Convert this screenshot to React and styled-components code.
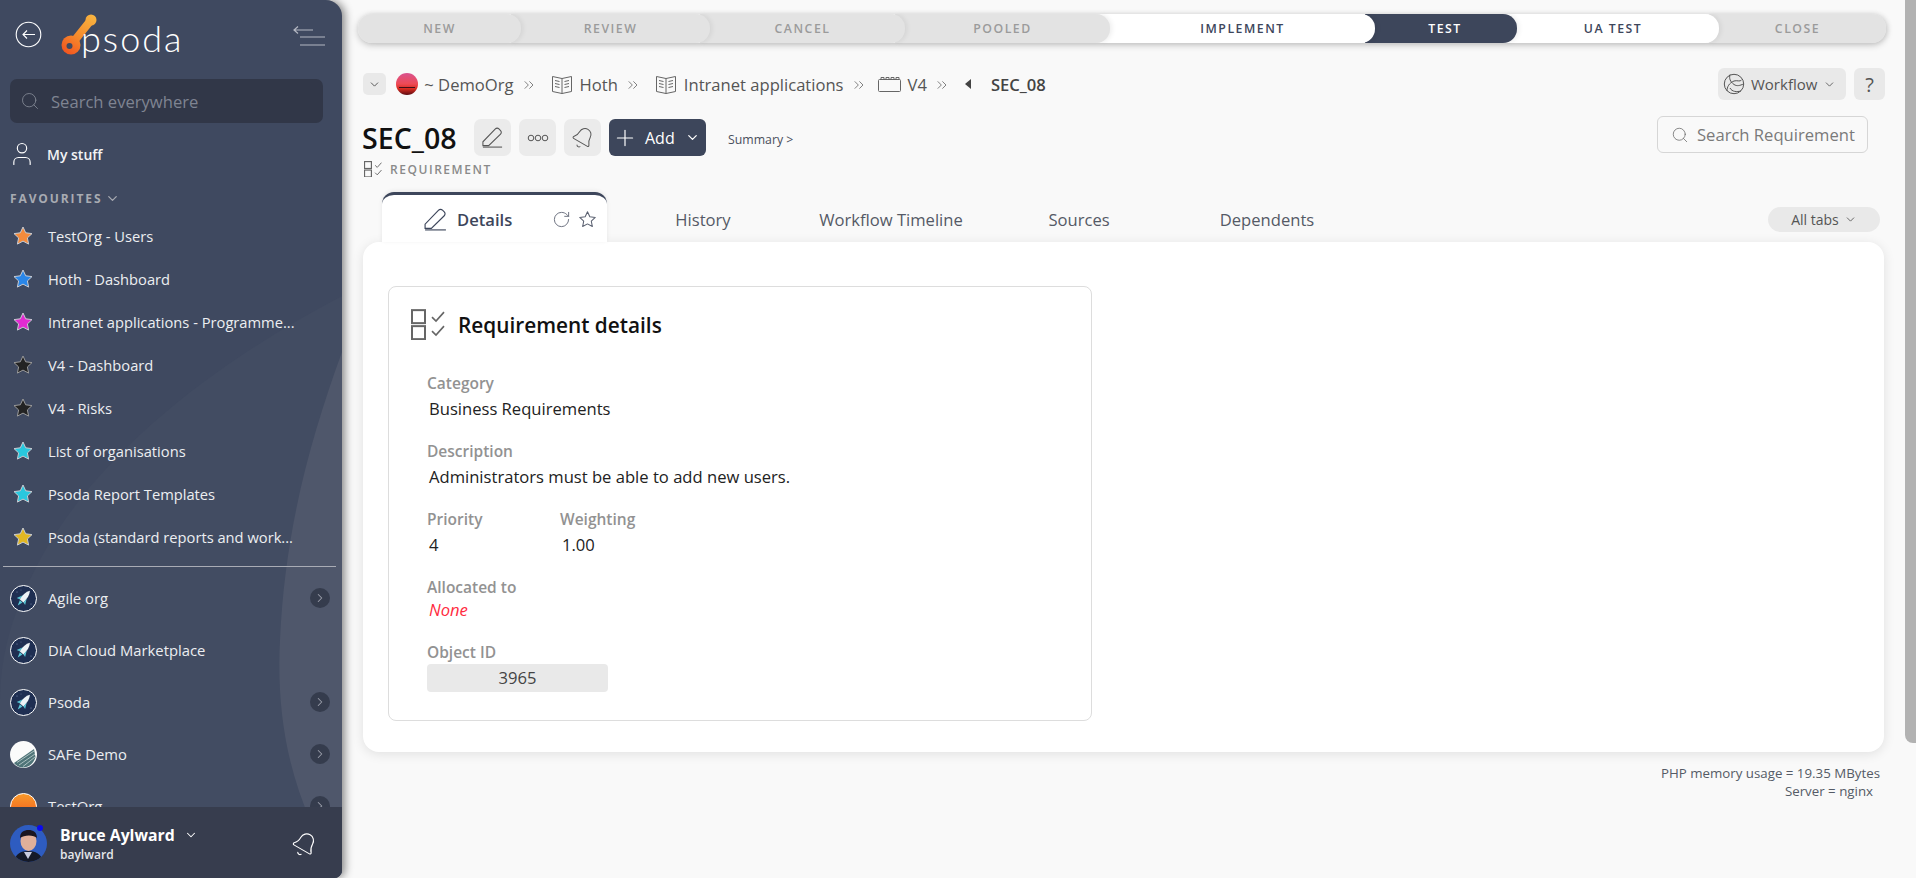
import React from "react";
import styled, { createGlobalStyle } from "styled-components";
import { Bell, ChevronDown, ChevronRight, ChevronsRight, Plus, RotateCw, Search, User } from "lucide-react";

const GlobalStyle = createGlobalStyle`
  html, body {
    margin: 0;
    padding: 0;
    height: 100%;
    overflow: hidden;
    background: #f9f9f9;
  }
  body {
    font-family: "Open Sans", "Liberation Sans", sans-serif;
    color: #222;
  }
  * { box-sizing: border-box; }
`;

const Page = styled.div`
  display: flex;
  width: 1916px;
  height: 878px;
  overflow: hidden;
`;

/* sidebar */
const Sidebar = styled.aside`
  position: relative;
  z-index: 5;
  flex: 0 0 342px;
  height: 878px;
  display: flex;
  flex-direction: column;
  overflow: hidden;
  background: #3f4960;
  border-radius: 0 16px 8px 0;
  box-shadow: 3px 0 8px rgba(0, 0, 0, 0.45);
`;

const Backdrop = styled.svg`
  position: absolute;
  inset: 0;
  width: 342px;
  height: 878px;
`;

const TopBar = styled.div`
  position: relative;
  height: 79px;
  flex: none;
  display: flex;
  align-items: flex-start;
  padding: 14px 16px 0 15px;
`;

const BackBtn = styled.svg`
  width: 27px;
  height: 27px;
  margin-top: 7px;
  margin-right: 17px;
  flex: none;
`;

const LogoMark = styled.svg`
  flex: none;
  margin-top: -2px;
`;

const Wordmark = styled.span`
  margin: 1px 0 0 -18px;
  font-family: Lato, "Open Sans", sans-serif;
  font-weight: 300;
  font-size: 36px;
  line-height: 46px;
  letter-spacing: 2px;
  color: #fff;
`;

const CollapseIcon = styled.svg`
  width: 33px;
  height: 22px;
  margin: 11px 0 0 auto;
`;

const SearchAll = styled.div`
  position: relative;
  flex: none;
  height: 44px;
  margin: 0 19px 0 10px;
  padding-left: 10px;
  display: flex;
  align-items: center;
  gap: 11px;
  border-radius: 7px;
  background: #313748;
  color: #7f8492;
  font-size: 16.6px;
  svg { flex: none; }
`;

const MineRow = styled.div`
  position: relative;
  flex: none;
  height: 40px;
  margin-top: 11px;
  padding-left: 8px;
  display: flex;
  align-items: center;
  gap: 11px;
  color: #f2f3f5;
  font-size: 14px;
  font-weight: 600;
`;

const FavHead = styled.div`
  position: relative;
  flex: none;
  height: 24px;
  margin: 12px 0 4px;
  padding-left: 10px;
  display: flex;
  align-items: center;
  gap: 3px;
  color: #a8abb2;
  font-size: 12px;
  font-weight: 700;
  letter-spacing: 1.9px;
`;

const FavRow = styled.div`
  position: relative;
  flex: none;
  height: 43px;
  padding-left: 12px;
  display: flex;
  align-items: center;
  gap: 14px;
  color: #eceef1;
  font-size: 14.7px;
`;

const Divider = styled.div`
  position: relative;
  flex: none;
  height: 1px;
  margin: 8px 6px 5px 3px;
  background: #a9acb5;
`;

const OrgList = styled.div`
  position: relative;
  flex: 1;
  min-height: 0;
  overflow: hidden;
`;

const OrgRow = styled.div`
  height: 52px;
  padding: 0 10px;
  display: flex;
  align-items: center;
  gap: 11px;
  color: #eceef1;
  font-size: 14.8px;
`;

const OrgName = styled.span`
  flex: 1;
`;

const Round = styled.span`
  width: 20px;
  height: 20px;
  margin-right: 2px;
  display: flex;
  align-items: center;
  justify-content: center;
  border-radius: 50%;
  background: #353c4d;
  color: #9a9eaa;
`;

const UserBar = styled.div`
  position: relative;
  flex: none;
  height: 71px;
  padding: 0 24px 0 10px;
  display: flex;
  align-items: center;
  background: #373d4e;
  color: #fff;
  > svg { margin-top: 3px; }
`;

const Face = styled.div`
  position: relative;
  width: 37px;
  height: 37px;
  margin: 1px 13px 0 0;
`;

const Dot = styled.span`
  position: absolute;
  top: 0;
  right: 4px;
  width: 6px;
  height: 6px;
  border-radius: 50%;
  background: #0a0af0;
`;

const UserText = styled.div`
  flex: 1;
  margin-top: 2px;
`;

const UserName = styled.div`
  display: flex;
  align-items: center;
  gap: 9px;
  font-size: 15.8px;
  line-height: 22px;
  font-weight: 700;
`;

const UserLogin = styled.div`
  font-size: 12px;
  line-height: 17px;
  font-weight: 600;
  color: #e6e7ea;
`;

/* main column */
const Main = styled.main`
  flex: 1;
  min-width: 0;
  height: 878px;
`;

const Stages = styled.div`
  display: flex;
  height: 29px;
  margin: 14px 19px 0 16px;
  border-radius: 14px;
  box-shadow: 0 2px 7px rgba(0, 0, 0, 0.22);
`;

const Stage = styled.div`
  position: relative;
  z-index: ${(p) => p.$z};
  flex: 0 0 ${(p) => p.$w}px;
  margin-left: ${(p) => (p.$first ? 0 : -10)}px;
  padding-left: ${(p) => p.$pad || 0}px;
  display: flex;
  align-items: center;
  justify-content: center;
  border-radius: ${(p) => (p.$first ? "14px" : "0 14px 14px 0")};
  background: ${(p) => (p.$kind === "current" ? "#3d465b" : p.$kind === "open" ? "#fff" : "#e3e3e3")};
  color: ${(p) => (p.$kind === "current" ? "#fff" : p.$kind === "open" ? "#3d465b" : "#9b9b9b")};
  box-shadow: 2px 0 5px rgba(0, 0, 0, 0.07);
  font-size: 12.3px;
  font-weight: 600;
  letter-spacing: 1.5px;
`;

const CrumbBar = styled.div`
  display: flex;
  align-items: center;
  height: 32px;
  margin: 25px 20px 0 21px;
  color: #555;
  font-size: 16.6px;
`;

const SmallBtn = styled.span`
  width: 23px;
  height: 22px;
  margin-right: 10px;
  display: flex;
  align-items: center;
  justify-content: center;
  border-radius: 5px;
  background: #e9e9e9;
  color: #444;
`;

const Crumb = styled.span`
  display: flex;
  align-items: center;
  margin-left: ${(p) => p.$lead || 0}px;
  gap: ${(p) => p.$gap ?? 7}px;
  svg { flex: none; }
`;

const Sep = styled.span`
  display: flex;
  margin: 2px 14px 0 7px;
  color: #555;
`;

const Here = styled.span`
  margin-left: 19px;
  font-weight: 600;
  color: #444;
`;

const CrumbTools = styled.div`
  margin-left: auto;
  display: flex;
  gap: 8px;
`;

const GreyBtn = styled.span`
  width: 128px;
  height: 32px;
  padding: 0 5px;
  display: flex;
  align-items: center;
  gap: 6px;
  border-radius: 6px;
  background: #e9e9e9;
  color: #555;
  font-size: 15px;
`;

const HelpBtn = styled(GreyBtn)`
  width: 31px;
  padding: 0;
  justify-content: center;
  font-size: 20px;
`;

const TitleRow = styled.div`
  position: relative;
  display: flex;
  align-items: center;
  height: 37px;
  margin: 19px 37px 0 20px;
`;

const Title = styled.h1`
  flex: 0 0 112px;
  margin: 0;
  font-size: 28.6px;
  line-height: 37px;
  font-weight: 600;
  color: #111;
`;

const IconBtn = styled.span`
  width: 37px;
  height: 37px;
  margin-right: 8px;
  display: flex;
  align-items: center;
  justify-content: center;
  border-radius: 7px;
  background: #ebebeb;
  color: #555;
`;

const AddBtn = styled.span`
  width: 97px;
  height: 37px;
  padding: 0 6px 0 3px;
  display: flex;
  align-items: center;
  border-radius: 6px;
  background: #3d465b;
  color: #fff;
  font-size: 16px;
  font-weight: 500;
  span { margin: 0 auto 0 7px; }
`;

const SummaryLink = styled.span`
  margin: 4px 0 0 22px;
  font-size: 12.3px;
  color: #4a4f5c;
`;

const FindBox = styled.div`
  position: absolute;
  right: 0;
  top: -3px;
  width: 211px;
  height: 37px;
  padding-left: 13px;
  display: flex;
  align-items: center;
  gap: 8px;
  overflow: hidden;
  white-space: nowrap;
  border: 1px solid #d6d6d6;
  border-radius: 6px;
  color: #7a7a7a;
  font-size: 16.6px;
  svg { flex: none; }
`;

const TypeRow = styled.div`
  display: flex;
  align-items: center;
  gap: 8px;
  height: 18px;
  margin: 4px 0 0 22px;
  color: #8a8a8a;
  font-size: 12px;
  font-weight: 600;
  letter-spacing: 1.55px;
`;

const TabBar = styled.div`
  position: relative;
  z-index: 1;
  display: flex;
  height: 50px;
  margin: 14px 25px 0 40px;
`;

const ActiveTab = styled.div`
  flex: 0 0 225px;
  margin-right: 2px;
  padding: 2px 10px 0 41px;
  display: flex;
  align-items: center;
  border-top: 3px solid #3d465b;
  border-radius: 12px 12px 0 0;
  background: #fff;
  color: #3d465b;
  font-size: 16.6px;
  font-weight: 600;
  box-shadow: 0 -1px 4px rgba(0, 0, 0, 0.08);
`;

const TabName = styled.span`
  margin: 0 auto 0 9px;
`;

const TabTool = styled.span`
  display: flex;
  margin-left: 7px;
  color: #5a6070;
`;

const Tab = styled.div`
  flex: 0 0 188px;
  padding-top: 4px;
  display: flex;
  align-items: center;
  justify-content: center;
  color: #555a66;
  font-size: 16.6px;
`;

const AllTabs = styled.span`
  align-self: flex-start;
  margin: 15px 0 0 auto;
  width: 112px;
  height: 25px;
  display: flex;
  align-items: center;
  justify-content: center;
  gap: 5px;
  border-radius: 13px;
  background: #e9e9e9;
  color: #555;
  font-size: 14px;
`;

const Panel = styled.section`
  position: relative;
  height: 510px;
  margin: 0 21px;
  padding: 44px 0 0 25px;
  border-radius: 16px;
  background: #fff;
  box-shadow: 0 2px 12px rgba(0, 0, 0, 0.1);
`;

const Card = styled.div`
  width: 704px;
  height: 435px;
  padding: 22px 0 0 22px;
  border: 1px solid #ddd;
  border-radius: 8px;
`;

const CardHead = styled.div`
  display: flex;
  align-items: center;
  gap: 13px;
  height: 31px;
`;

const CardTitle = styled.h2`
  margin: 0;
  font-size: 20.8px;
  font-weight: 600;
  color: #111;
`;

const Fields = styled.div`
  display: flex;
  flex-direction: column;
  gap: 20px;
  margin: 33px 0 0 16px;
`;

const FieldPair = styled.div`
  display: flex;
`;

const Field = styled.div`
  width: ${(p) => (p.$w ? `${p.$w}px` : "auto")};
`;

const Label = styled.div`
  font-size: 15.5px;
  line-height: 20px;
  font-weight: 600;
  color: #929292;
`;

const Value = styled.div`
  margin-top: 4px;
  padding-left: 2px;
  font-size: 16.6px;
  line-height: 24px;
  color: #222;
`;

const NoneValue = styled(Value)`
  margin: 1px 0 0;
  font-style: italic;
  color: #ff2b40;
`;

const IdBox = styled.div`
  width: 181px;
  height: 28px;
  margin-top: 2px;
  padding-bottom: 1px;
  display: flex;
  align-items: center;
  justify-content: center;
  border-radius: 4px;
  background: #e9e9e9;
  color: #444;
  font-size: 16.6px;
`;

const Foot = styled.div`
  margin: 12px 25px 0 0;
  text-align: right;
  font-size: 13.3px;
  line-height: 18px;
  color: #555b66;
`;

const FootLine = styled.div`
  padding-right: ${(p) => p.$right || 0}px;
`;

const Scroll = styled.div`
  flex: 0 0 11px;
  height: 743px;
  border-radius: 0 0 0 8px;
  background: #b2b2b2;
`;

/* drawings */
const StarIcon = ({ color, edge = "#c9ccd3" }) => (
  <svg width="22" height="22" viewBox="0 0 22 22" style={{ flex: "none" }}>
    <path
      d="M11 2l2.7 5.8 6.3.8-4.6 4.3 1.200 6.200L11 16.100 5.400 19.100l1.200-6.200L2 8.600l6.300-.8z"
      fill={color}
      stroke={edge}
      strokeWidth="1"
      strokeLinejoin="round"
    />
  </svg>
);

const PencilIcon = ({ size = 24, color = "currentColor" }) => (
  <svg width={size} height={size} viewBox="0 0 24 24" fill="none" stroke={color} strokeWidth="1.1">
    <path d="M2 20.500v-4L15 3a2.600 2.600 0 0 1 3.700 0l1.700 1.700a2.600 2.600 0 0 1 0 3.700L8 20.500H2z" />
    <path d="M2 22h20" />
  </svg>
);

const ReqIcon = ({ size = 20, strong = 1 }) => (
  <svg width={size} height={size * 0.92} viewBox="0 0 34 31" fill="none" stroke="#666" style={{ flex: "none" }}>
    <rect x="1" y="1" width="13" height="13" strokeWidth={2 * strong} />
    <rect x="1" y="17" width="13" height="13" strokeWidth={2 * strong} />
    <path d="M21 8l4 4 8-9M21 22l4 4 8-9" strokeWidth={1.6 * strong} />
  </svg>
);

const BookIcon = () => (
  <svg width="22" height="22" viewBox="0 0 22 22" fill="none" stroke="#666" strokeWidth="1">
    <path d="M1.500 3.500l9.500 2 9.500-2v15l-9.500 2-9.500-2zM11 5.500v15" />
    <path d="M4 7.500l4.500 1M4 10.500l4.500 1M4 13.500l4.500 1M18 7.500l-4.500 1M18 10.500l-4.500 1M18 13.500l-4.500 1" />
  </svg>
);

const BrickIcon = () => (
  <svg width="23" height="16" viewBox="0 0 23 16" fill="none" stroke="#666" strokeWidth="1">
    <rect x="0.500" y="3.500" width="22" height="12" rx="1" />
    <path d="M3 3.500V1.500h3v2M8 3.500V1.500h3v2M13 3.500V1.500h3v2M18 3.500V1.500h3v2" />
  </svg>
);

const FlowIcon = () => (
  <svg width="22" height="22" viewBox="0 0 22 22" fill="none" stroke="#555" strokeWidth="1" style={{ flex: "none" }}>
    <circle cx="11" cy="11" r="9.700" />
    <path d="M7 1.500c-1 4 0 7 4 10 3 2 6 1 9.500-.5M4 18c0-4 2-8 7-10 3-1 6 1 7.500-1M18 18c-4 1-9 1-11-3" />
  </svg>
);

const RocketFace = () => (
  <svg width="27" height="27" viewBox="0 0 27 27" style={{ flex: "none" }}>
    <circle cx="13.500" cy="13.500" r="13" fill="#1f2f52" stroke="#fff" strokeWidth="1" />
    <circle cx="7" cy="7" r="0.500" fill="#8fa0c0" />
    <circle cx="21" cy="19" r="0.500" fill="#8fa0c0" />
    <circle cx="11" cy="5" r="0.400" fill="#8fa0c0" />
    <g transform="rotate(40 13.500 13.500)">
      <path d="M13.500 3.500C16 7 16.500 11 16 16.500H11C10.500 11 11 7 13.500 3.500z" fill="#eef3f6" />
      <path d="M11 11.500L8 17.500 11 16.500zM16 11.500L19 17.500 16 16.500z" fill="#59c6d6" />
      <path d="M11.800 17.200L13.500 22.500 15.200 17.200z" fill="#59c6d6" />
    </g>
  </svg>
);

const SafeFace = () => (
  <svg width="27" height="27" viewBox="0 0 27 27" style={{ flex: "none" }}>
    <circle cx="13.500" cy="13.500" r="13.500" fill="#fbfbfb" />
    <path d="M4 22L24 8l1.500 8C24 22 19 26.500 13.500 26.500 9 26.500 6 24.500 4 22z" fill="#4f7478" />
    <path d="M7 21.500L24 10M9 24L25 13M13 25.500L25 16" stroke="#c7d5d6" strokeWidth="0.8" />
  </svg>
);

const OrangeFace = () => (
  <svg width="27" height="27" viewBox="0 0 27 27" style={{ flex: "none" }}>
    <defs>
      <linearGradient id="testorg" x1="0" y1="0" x2="0" y2="1">
        <stop offset="0" stopColor="#f79a2a" />
        <stop offset="1" stopColor="#f4581c" />
      </linearGradient>
    </defs>
    <circle cx="13.500" cy="13.500" r="13" fill="url(#testorg)" stroke="#fff" strokeWidth="1" />
  </svg>
);

const DemoOrgFace = () => (
  <svg width="22" height="22" viewBox="0 0 22 22" style={{ flex: "none" }}>
    <defs>
      <linearGradient id="sunset" x1="0" y1="0" x2="0" y2="1">
        <stop offset="0" stopColor="#d9538f" />
        <stop offset="0.5" stopColor="#ee4a55" />
        <stop offset="0.72" stopColor="#d82a1e" />
        <stop offset="1" stopColor="#5a0c14" />
      </linearGradient>
    </defs>
    <circle cx="11" cy="11" r="11" fill="url(#sunset)" />
    <rect x="3" y="14" width="16" height="1" fill="#40101a" />
  </svg>
);

const UserFace = () => (
  <svg width="37" height="37" viewBox="0 0 37 37">
    <defs>
      <clipPath id="userclip">
        <circle cx="18.500" cy="18.500" r="18.500" />
      </clipPath>
    </defs>
    <g clipPath="url(#userclip)">
      <rect width="37" height="37" fill="#2e5cc0" />
      <path d="M4 37c1-8 7-11 14-11s14 3 15 11z" fill="#151a28" />
      <path d="M14 27l4 7 4-7z" fill="#c9cde0" />
      <ellipse cx="18.500" cy="16" rx="8" ry="10" fill="#e0b09a" />
      <path d="M10 13c0-6 4-8 8.500-8s8.500 2 8.500 8c-3-3.500-13-3.500-17 0z" fill="#1a1620" />
    </g>
  </svg>
);

const stages = [
  { name: "NEW", w: 163, kind: "off" },
  { name: "REVIEW", w: 199, kind: "off" },
  { name: "CANCEL", w: 205, kind: "off" },
  { name: "POOLED", w: 215, kind: "off" },
  { name: "IMPLEMENT", w: 275, kind: "open", pad: 10 },
  { name: "TEST", w: 152, kind: "current", pad: 8 },
  { name: "UA TEST", w: 212, kind: "open" },
  { name: "CLOSE", w: 177, kind: "off" },
];

const favourites = [
  { name: "TestOrg - Users", color: "#f58b3c" },
  { name: "Hoth - Dashboard", color: "#2a86e8" },
  { name: "Intranet applications - Programme...", color: "#e22bd2" },
  { name: "V4 - Dashboard", color: "#232323", edge: "#9a9a9a" },
  { name: "V4 - Risks", color: "#232323", edge: "#9a9a9a" },
  { name: "List of organisations", color: "#28c8de" },
  { name: "Psoda Report Templates", color: "#28c8de" },
  { name: "Psoda (standard reports and work...", color: "#e3b822" },
];

const orgs = [
  { name: "Agile org", Face: RocketFace, more: true },
  { name: "DIA Cloud Marketplace", Face: RocketFace },
  { name: "Psoda", Face: RocketFace, more: true },
  { name: "SAFe Demo", Face: SafeFace, more: true },
  { name: "TestOrg", Face: OrangeFace, more: true },
];

const Chevrons = () => (
  <Sep>
    <ChevronsRight size={16} strokeWidth={1.100} />
  </Sep>
);

const App = () => {
  return (
    <Page>
      <GlobalStyle />
      <Sidebar>
        <Backdrop viewBox="0 0 342 878">
          <path d="M342 296C200 370 80 470 30 580 10 620 0 660 0 700V878H342z" fill="#424c62" />
          <path d="M342 352C310 440 285 530 280 640 276 720 290 800 342 878z" fill="#4f576b" />
        </Backdrop>
        <TopBar>
          <BackBtn viewBox="0 0 27 27" fill="none" stroke="#fff" strokeWidth="1.100">
            <circle cx="13.500" cy="13.500" r="12.300" />
            <path d="M20 13.500H8M12 9.500l-4 4 4 4" />
          </BackBtn>
          <LogoMark width="40" height="46" viewBox="0 0 40 46">
            <defs>
              <linearGradient id="psodamark" gradientUnits="userSpaceOnUse" x1="34" y1="3" x2="6" y2="42">
                <stop offset="0" stopColor="#f8b440" />
                <stop offset="0.55" stopColor="#f58a2c" />
                <stop offset="1" stopColor="#f2521f" />
              </linearGradient>
            </defs>
            <path d="M32 8L16 28" stroke="url(#psodamark)" strokeWidth="8" strokeLinecap="round" />
            <circle cx="32" cy="8" r="5.500" fill="url(#psodamark)" />
            <circle cx="12" cy="33" r="9.500" fill="url(#psodamark)" />
            <circle cx="10.500" cy="34" r="3" fill="#3f4960" />
          </LogoMark>
          <Wordmark>psoda</Wordmark>
          <CollapseIcon viewBox="0 0 33 22" fill="none" stroke="#b4b8c2" strokeWidth="1.200">
            <path d="M1 5h19M5 1.500L1 5l4 3.500M7 12h25M7 20h25" />
          </CollapseIcon>
        </TopBar>
        <SearchAll>
          <Search size={20} strokeWidth={1} color="#868b98" />
          Search everywhere
        </SearchAll>
        <MineRow>
          <User size={28} strokeWidth={1} color="#fff" />
          My stuff
        </MineRow>
        <FavHead>
          FAVOURITES
          <ChevronDown size={15} strokeWidth={2} />
        </FavHead>
        {favourites.map((f) => (
          <FavRow key={f.name}>
            <StarIcon color={f.color} edge={f.edge} />
            {f.name}
          </FavRow>
        ))}
        <Divider />
        <OrgList>
          {orgs.map((o) => (
            <OrgRow key={o.name}>
              <o.Face />
              <OrgName>{o.name}</OrgName>
              {o.more && (
                <Round>
                  <ChevronRight size={14} strokeWidth={1.800} />
                </Round>
              )}
            </OrgRow>
          ))}
        </OrgList>
        <UserBar>
          <Face>
            <UserFace />
            <Dot />
          </Face>
          <UserText>
            <UserName>
              Bruce Aylward
              <ChevronDown size={14} strokeWidth={1.800} />
            </UserName>
            <UserLogin>baylward</UserLogin>
          </UserText>
          <Bell size={27} strokeWidth={1} color="#fff" style={{ transform: "rotate(30deg)" }} />
        </UserBar>
      </Sidebar>

      <Main>
        <Stages>
          {stages.map((s, i) => (
            <Stage key={s.name} $w={s.w} $kind={s.kind} $pad={s.pad} $first={i === 0} $z={stages.length - i}>
              {s.name}
            </Stage>
          ))}
        </Stages>

        <CrumbBar>
          <SmallBtn>
            <ChevronDown size={13} strokeWidth={1.600} />
          </SmallBtn>
          <Crumb $gap={2}>
            <DemoOrgFace />
            <span>&nbsp;~ DemoOrg</span>
          </Crumb>
          <Chevrons />
          <Crumb>
            <BookIcon />
            Hoth
          </Crumb>
          <Chevrons />
          <Crumb>
            <BookIcon />
            Intranet applications
          </Crumb>
          <Chevrons />
          <Crumb $lead={-3}>
            <BrickIcon />
            V4
          </Crumb>
          <Chevrons />
          <svg width="8" height="12" viewBox="0 0 8 12">
            <path d="M7 1v10L1 6z" fill="#444" />
          </svg>
          <Here>SEC_08</Here>
          <CrumbTools>
            <GreyBtn>
              <FlowIcon />
              Workflow
              <ChevronDown size={13} strokeWidth={1.600} />
            </GreyBtn>
            <HelpBtn>?</HelpBtn>
          </CrumbTools>
        </CrumbBar>

        <TitleRow>
          <Title>SEC_08</Title>
          <IconBtn>
            <PencilIcon size={23} />
          </IconBtn>
          <IconBtn>
            <svg width="22" height="8" viewBox="0 0 22 8" fill="none" stroke="#555" strokeWidth="1">
              <circle cx="4" cy="4" r="2.800" />
              <circle cx="11" cy="4" r="2.800" />
              <circle cx="18" cy="4" r="2.800" />
            </svg>
          </IconBtn>
          <IconBtn>
            <Bell size={24} strokeWidth={1} style={{ transform: "rotate(30deg)" }} />
          </IconBtn>
          <AddBtn>
            <Plus size={26} strokeWidth={1.100} />
            <span>Add</span>
            <ChevronDown size={15} strokeWidth={2} />
          </AddBtn>
          <SummaryLink>Summary &gt;</SummaryLink>
          <FindBox>
            <Search size={18} strokeWidth={1} color="#666" />
            Search Requirement
          </FindBox>
        </TitleRow>

        <TypeRow>
          <ReqIcon size={18} strong={1.100} />
          REQUIREMENT
        </TypeRow>

        <TabBar>
          <ActiveTab>
            <PencilIcon size={25} />
            <TabName>Details</TabName>
            <TabTool>
              <RotateCw size={19} strokeWidth={1.100} />
            </TabTool>
            <TabTool>
              <svg width="19" height="19" viewBox="0 0 22 22">
                <path
                  d="M11 2l2.700 5.800 6.300.8-4.600 4.300 1.200 6.200L11 16.100 5.400 19.100l1.200-6.200L2 8.600l6.300-.8z"
                  fill="none"
                  stroke="#5a6070"
                  strokeWidth="1.200"
                  strokeLinejoin="round"
                />
              </svg>
            </TabTool>
          </ActiveTab>
          <Tab>History</Tab>
          <Tab>Workflow Timeline</Tab>
          <Tab>Sources</Tab>
          <Tab>Dependents</Tab>
          <AllTabs>
            All tabs
            <ChevronDown size={13} strokeWidth={1.600} />
          </AllTabs>
        </TabBar>

        <Panel>
          <Card>
            <CardHead>
              <ReqIcon size={34} />
              <CardTitle>Requirement details</CardTitle>
            </CardHead>
            <Fields>
              <Field>
                <Label>Category</Label>
                <Value>Business Requirements</Value>
              </Field>
              <Field>
                <Label>Description</Label>
                <Value>Administrators must be able to add new users.</Value>
              </Field>
              <FieldPair>
                <Field $w={133}>
                  <Label>Priority</Label>
                  <Value>4</Value>
                </Field>
                <Field>
                  <Label>Weighting</Label>
                  <Value>1.00</Value>
                </Field>
              </FieldPair>
              <Field>
                <Label>Allocated to</Label>
                <NoneValue>None</NoneValue>
              </Field>
              <Field>
                <Label>Object ID</Label>
                <IdBox>3965</IdBox>
              </Field>
            </Fields>
          </Card>
        </Panel>

        <Foot>
          <FootLine>PHP memory usage = 19.35 MBytes</FootLine>
          <FootLine $right={7}>Server = nginx</FootLine>
        </Foot>
      </Main>

      <Scroll />
    </Page>
  );
};

export default App;
